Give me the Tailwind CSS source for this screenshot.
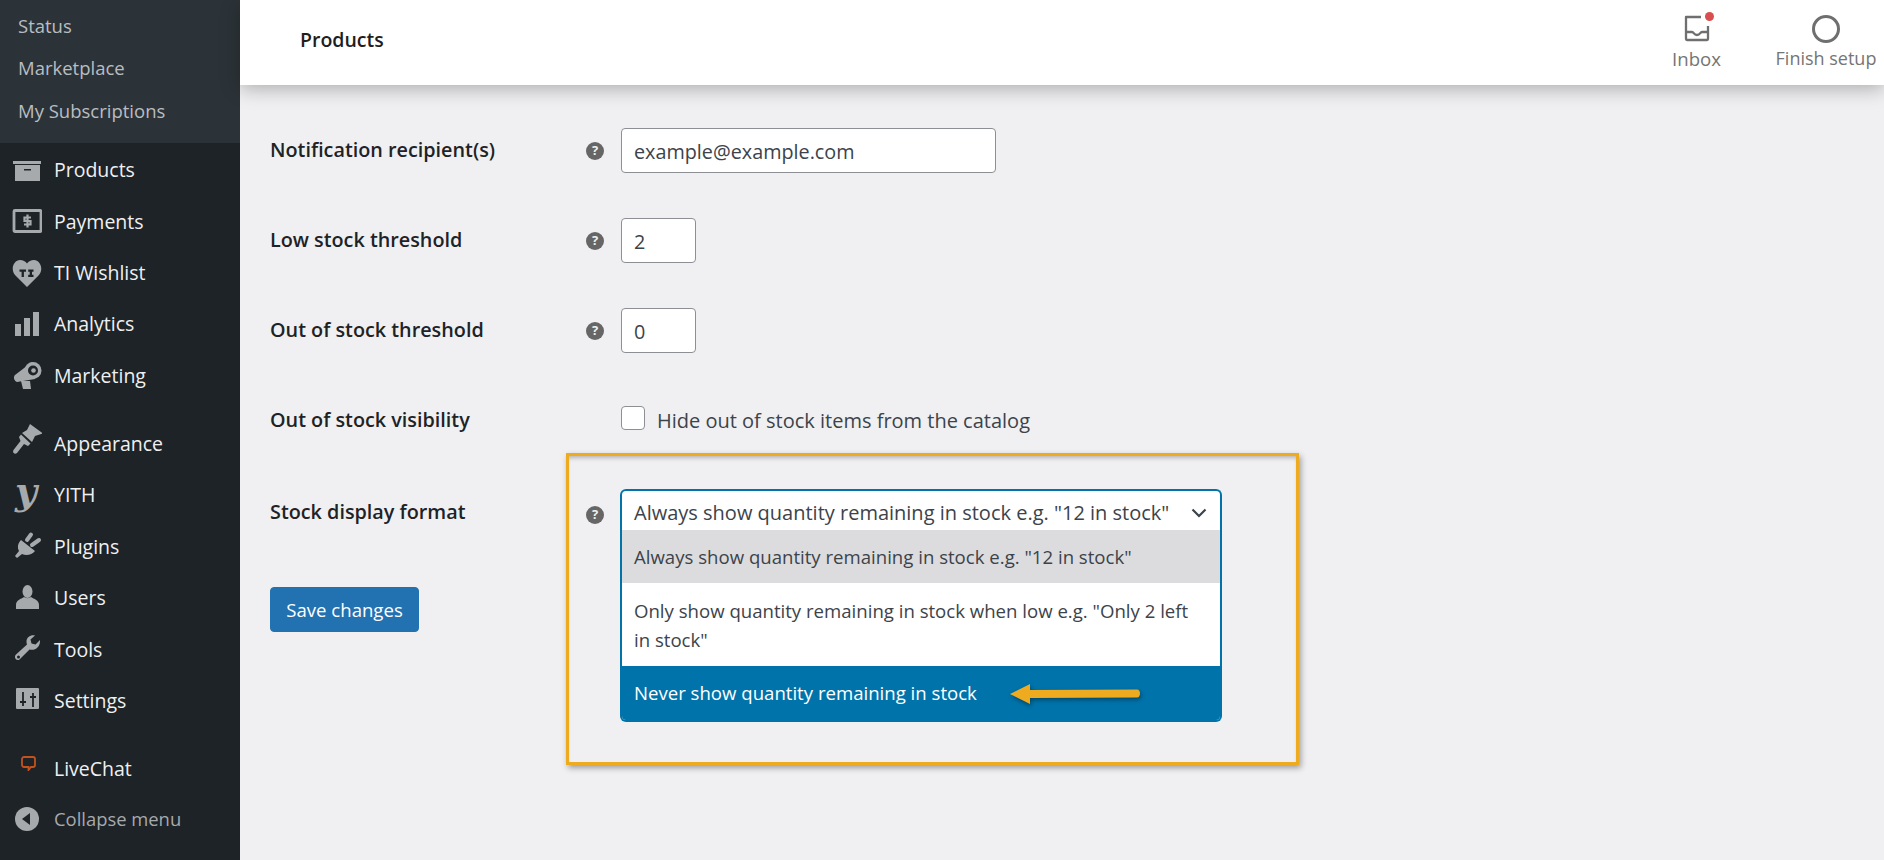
<!DOCTYPE html>
<html lang="en">
  <head>
    <meta charset="UTF-8" />
    <title>Products</title>
    <script src="https://cdn.jsdelivr.net/npm/@tailwindcss/browser@4"></script>
  </head>
  <body class="h-[860px] overflow-hidden bg-[#f0f0f2] font-['Open_Sans',sans-serif] text-[18.6px] text-[#3c434a]">
    <div class="flex h-[860px]">
      <!-- sidebar -->
      <aside class="w-[240px] shrink-0 bg-[#1d2327] text-[19.5px] text-[#f0f0f1]">
        <div class="h-[143px] bg-[#2c3338] pl-[18px] text-[18.5px] text-[#b9bdc1]">
          <div class="flex h-[42px] items-center pt-[10px]">Status</div>
          <div class="flex h-[42px] items-center pt-[10px]">Marketplace</div>
          <div class="flex h-[43px] items-center pt-[10px]">My Subscriptions</div>
        </div>

        <div class="pt-[1px]">
          <div class="flex h-[51.5px] items-center">
            <svg class="mx-[12px] h-[30px] w-[30px]" viewBox="0 0 30 30" fill="#a7aaad"><path d="M1 6h28v3H1zM3 10h25v16H3zM12 14v1.500h7V14z" fill-rule="evenodd"/></svg>
            <span>Products</span>
          </div>
          <div class="flex h-[51.5px] items-center">
            <svg class="mx-[12px] h-[30px] w-[30px]" viewBox="0 0 30 30" fill="none"><rect x="2" y="4.500" width="27" height="21" stroke="#a7aaad" stroke-width="2.800" rx="1"/><path d="M19 11.500h-6.500v3.500h6v3.500H12M15.500 8.500v13" stroke="#a7aaad" stroke-width="2.200"/></svg>
            <span>Payments</span>
          </div>
          <div class="flex h-[51.5px] items-center">
            <svg class="mx-[12px] h-[30px] w-[30px]" viewBox="0 0 30 30" fill="#a7aaad"><path d="M15 29 3 17C-2 11 2 2 8 2c3 0 5.500 1.500 7 3.500C16.500 3.500 19 2 22 2c6 0 10 9 5 15z"/><path d="M7.500 11.500h6.500v2.200h-2.100V19H9.600v-5.300H7.500zM16.200 11.500h5.300v2.200h-1.500v3.100h1.500V19h-5.300v-2.200h1.500v-3.100h-1.500z" fill="#1d2327"/></svg>
            <span>TI Wishlist</span>
          </div>
          <div class="flex h-[51px] items-center">
            <svg class="mx-[12px] h-[30px] w-[30px]" viewBox="0 0 30 30" fill="#a7aaad"><path d="M3 15h6v12H3zM12 9h6v18h-6zM21 3h6v24h-6z"/></svg>
            <span>Analytics</span>
          </div>
          <div class="flex h-[52px] items-center">
            <svg class="mx-[12px] h-[30px] w-[30px]" viewBox="0 0 30 30" fill="#a7aaad"><path d="M3 14 20 1l3 17-18 3c-3-1-4-5-2-7z"/><path d="M9 20h9l1 8h-8z"/><circle cx="21" cy="9.500" r="8.500"/><circle cx="21" cy="9.500" r="5" fill="#1d2327"/><circle cx="21.500" cy="9.500" r="2.300"/></svg>
            <span>Marketing</span>
          </div>
        </div>

        <div class="mt-[16px] flex h-[51.5px] items-center">
          <svg class="mx-[12px] mb-[9px] h-[30px] w-[30px]" viewBox="0 0 30 30" fill="#a7aaad"><path d="M18 0l13 9.500-8 2.500-3 6-10-9 5-3z"/><path d="M9 10.500l9.500 9-2.500 2.500-4-2-7 9c-2 2-5 0-3.500-3l7-9-1.500-4z"/></svg>
          <span>Appearance</span>
        </div>
        <div class="flex h-[51.500px] items-center">
          <span class="mb-[8px] flex w-[54px] justify-center pr-[2px] font-['DejaVu_Serif',serif] text-[38px] font-bold italic leading-none text-[#a7aaad]">y</span>
          <span>YITH</span>
        </div>
        <div class="flex h-[51.5px] items-center">
          <svg class="mx-[12px] h-[30px] w-[30px]" viewBox="0 0 30 30" fill="#a7aaad"><path d="M9 9l14 11c-3 4-9 5-13 3l-5 4-2-2 4-5c-2-4-1-8 2-11z"/><path d="M15 9l4-5.500M20 14l7-5" stroke="#a7aaad" stroke-width="4" stroke-linecap="round"/></svg>
          <span>Plugins</span>
        </div>
        <div class="flex h-[51.5px] items-center">
          <svg class="mx-[12px] h-[30px] w-[30px]" viewBox="0 0 30 30" fill="#a7aaad"><ellipse cx="15.500" cy="8.500" rx="5" ry="6.500"/><path d="M4 26v-4c0-5 5-6 8-8 2 1.500 5 1.500 7 0 3 2 8 3 8 8v4z"/></svg>
          <span>Users</span>
        </div>
        <div class="flex h-[51.5px] items-center">
          <svg class="mx-[12px] h-[30px] w-[30px]" viewBox="0 0 30 30" fill="#a7aaad"><path d="M28 6l-4.500 4.500-4-1-1-4L23 1.500c-4-1-8.500 1.500-8.500 6 0 1 0 2 .5 3L4 20.500c-2.500 2.500 0 7 3.500 5l10-10c5 1.500 11-2 10.500-9.500z"/><circle cx="6.500" cy="23" r="1.500" fill="#1d2327"/></svg>
          <span>Tools</span>
        </div>
        <div class="flex h-[51.5px] items-center">
          <svg class="mx-[12px] h-[30px] w-[30px]" viewBox="0 0 30 30" fill="#a7aaad"><rect x="4" y="2" width="23" height="21" rx="1"/><path d="M11 6v14M8 16h6M21 7v14M18 11h6" stroke="#1d2327" stroke-width="1.800" fill="none"/></svg>
          <span>Settings</span>
        </div>

        <div class="mt-[16px] flex h-[51.5px] items-center">
          <svg class="ml-[21px] mr-[18px] mb-[10px] h-[15px] w-[15px]" viewBox="0 0 15 15" fill="none"><path d="M3 1h9a2 2 0 0 1 2 2v6a2 2 0 0 1-2 2h-2l-2.500 3v-3H3a2 2 0 0 1-2-2V3a2 2 0 0 1 2-2z" stroke="#c2531f" stroke-width="1.800"/></svg>
          <span>LiveChat</span>
        </div>
        <div class="flex h-[50px] items-center text-[18.4px] text-[#a7aaad]">
          <svg class="mx-[15px] h-[24px] w-[24px]" viewBox="0 0 24 24"><circle cx="12" cy="12" r="12" fill="#a7aaad"/><path d="M15 6v12l-8-6z" fill="#1d2327"/></svg>
          <span>Collapse menu</span>
        </div>
      </aside>

      <!-- content -->
      <main class="relative flex-1">
        <header class="flex h-[85px] items-center justify-between bg-white pl-[60px] pr-[3px] shadow-[0_4px_18px_rgba(0,0,0,0.28)]">
          <h1 class="pb-[6px] text-[19.5px] font-semibold text-[#1e1e1e]">Products</h1>
          <div class="flex text-[#757575]">
            <div class="mr-[50px] flex flex-col items-center">
              <div class="relative h-[30px] w-[30px]">
                <svg class="h-[30px] w-[30px]" viewBox="0 0 30 30" fill="none" stroke="#6f6f6f" stroke-width="2.300" stroke-linejoin="round"><path d="M19 4H4v22a1 1 0 0 0 1 1h20a1 1 0 0 0 1-1V13"/><path d="M4 19h6c2 0 1.500 3 5 3s3-3 5-3h6"/></svg>
                <span class="absolute right-[-2px] top-[-1px] h-[9px] w-[9px] rounded-full bg-[#d94f4f]"></span>
              </div>
              <span class="mt-[2px]">Inbox</span>
            </div>
            <div class="flex w-[110px] flex-col items-center">
              <span class="mt-[2px] h-[28px] w-[28px] rounded-full border-[3.500px] border-[#6f6f6f]"></span>
              <span class="mt-[2px] whitespace-nowrap text-[18px]">Finish setup</span>
            </div>
          </div>
        </header>

        <form class="pl-[30px] pt-[43px]">
          <div class="flex h-[90px] items-start">
            <label class="w-[316px] pt-[7px] text-[19.8px] font-semibold text-[#1d2327]">Notification recipient(s)</label>
            <span class="mr-[17px] mt-[14px] flex h-[18px] w-[18px] items-center justify-center rounded-full bg-[#666] text-[13px] font-bold text-[#f0f0f1]">?</span>
            <input class="h-[45px] w-[375px] rounded-[4px] border border-[#8c8f94] bg-white px-[12px] pt-[2px] text-[19.8px] text-[#3c434a]" value="example@example.com" />
          </div>
          <div class="flex h-[90px] items-start">
            <label class="w-[316px] pt-[7px] text-[19.8px] font-semibold text-[#1d2327]">Low stock threshold</label>
            <span class="mr-[17px] mt-[14px] flex h-[18px] w-[18px] items-center justify-center rounded-full bg-[#666] text-[13px] font-bold text-[#f0f0f1]">?</span>
            <input class="h-[45px] w-[75px] rounded-[4px] border border-[#8c8f94] bg-white px-[12px] pt-[2px] text-[19.8px] text-[#3c434a]" value="2" />
          </div>
          <div class="flex h-[90px] items-start">
            <label class="w-[316px] pt-[7px] text-[19.8px] font-semibold text-[#1d2327]">Out of stock threshold</label>
            <span class="mr-[17px] mt-[14px] flex h-[18px] w-[18px] items-center justify-center rounded-full bg-[#666] text-[13px] font-bold text-[#f0f0f1]">?</span>
            <input class="h-[45px] w-[75px] rounded-[4px] border border-[#8c8f94] bg-white px-[12px] pt-[2px] text-[19.8px] text-[#3c434a]" value="0" />
          </div>
          <div class="flex h-[91px] items-start">
            <label class="w-[351px] pt-[7px] text-[19.8px] font-semibold text-[#1d2327]">Out of stock visibility</label>
            <span class="mt-[8px] h-[24px] w-[24px] rounded-[4px] border border-[#8c8f94] bg-white"></span>
            <span class="ml-[12px] pt-[8px] text-[20px]">Hide out of stock items from the catalog</span>
          </div>
          <div class="flex h-[97px] items-start">
            <label class="w-[316px] pt-[8px] text-[19.8px] font-semibold text-[#1d2327]">Stock display format</label>
            <span class="mr-[16px] mt-[17px] flex h-[18px] w-[18px] items-center justify-center rounded-full bg-[#666] text-[13px] font-bold text-[#f0f0f1]">?</span>
            <!-- open select -->
            <div class="relative z-10 w-[602px]">
              <div class="flex h-[41px] items-center justify-between rounded-t-[6px] border-x-2 border-t-2 border-[#0073aa] bg-white pl-[12px] pr-[13px] pt-[4px] text-[20px]">
                <span class="whitespace-nowrap">Always show quantity remaining in stock e.g. "12 in stock"</span>
                <svg class="h-[14px] w-[16px]" viewBox="0 0 16 14" fill="none" stroke="#3c434a" stroke-width="2.200"><path d="M1.500 3.500 8 10l6.500-6.500"/></svg>
              </div>
              <ul class="absolute inset-x-0 top-[41px] overflow-hidden rounded-b-[6px] border-x-2 border-b-2 border-[#0073aa] bg-white">
                <li class="flex h-[53px] items-center bg-[#dcdcde] pl-[12px] pr-[24px]">Always show quantity remaining in stock e.g. "12 in stock"</li>
                <li class="flex h-[83px] items-center pl-[12px] pr-[24px] leading-[29px]">Only show quantity remaining in stock when low e.g. "Only 2 left in stock"</li>
                <li class="flex h-[54px] items-center bg-[#0073aa] pl-[12px] pr-[24px] text-white">Never show quantity remaining in stock</li>
              </ul>
            </div>
          </div>
          <button type="button" class="mt-[1px] block h-[45px] w-[149px] rounded-[4px] border border-[#2271b1] bg-[#2271b1] text-white">Save changes</button>
        </form>

        <!-- annotation over the screenshot -->
        <div class="absolute left-[326px] top-[453px] h-[312px] w-[733px] border-[3.500px] border-[#eeab1f] shadow-[2px_3px_6px_rgba(0,0,0,0.35),inset_0_4px_4px_-2px_rgba(0,0,0,0.25)]"></div>
        <svg class="absolute left-[768px] top-[680px] z-20 h-[28px] w-[134px] drop-shadow-[1px_2px_2px_rgba(0,0,0,0.4)]" viewBox="0 0 134 28" fill="#eeab1f"><path d="M2 14 22 4v6l107-.5c4 0 4 8 0 8L22 18v6z"/></svg>
      </main>
    </div>
  </body>
</html>
